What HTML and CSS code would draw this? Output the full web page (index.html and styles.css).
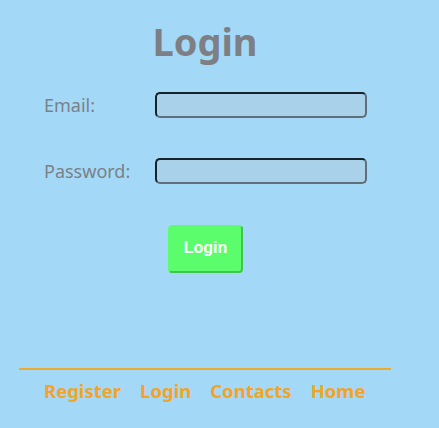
FILE: index.html
```html
<!DOCTYPE html>
<html>
<head>
<meta charset="utf-8">
<link rel="stylesheet" href="styles.css">
</head>
<body>
<div class="wrap">
  <h1 class="title">Login</h1>
  <form class="form">
    <div class="row">
      <label class="label">Email:</label>
      <input class="field" type="text">
    </div>
    <div class="row">
      <label class="label">Password:</label>
      <input class="field" type="password">
    </div>
    <div class="actions">
      <button class="btn" type="button">Login</button>
    </div>
  </form>
  <nav class="footer">
    <a class="link">Register</a>
    <a class="link">Login</a>
    <a class="link">Contacts</a>
    <a class="link">Home</a>
  </nav>
</div>
</body>
</html>
```
FILE: styles.css
```css
html, body {
  margin: 0;
  padding: 0;
  background: #a3d8f7;
  height: 100%;
}
body {
  font-family: "Noto Sans", "Open Sans", sans-serif;
  color: #7b8188;
}
.wrap {
  margin-left: 19px;
  width: 372px;
  padding-top: 15px;
}
.title {
  margin: 0;
  text-align: center;
  font-size: 38px;
  line-height: 52px;
  font-weight: 700;
  color: #7d7f84;
}
.form {
  padding-left: 25px;
  margin-top: 25px;
  display: flex;
  flex-direction: column;
  gap: 40px;
}
.row {
  display: flex;
  align-items: center;
  height: 26px;
}
.label {
  width: 111px;
  font-size: 18px;
}
.field {
  box-sizing: border-box;
  width: 212px;
  height: 26px;
  margin: 0;
  background: #a9d1ea;
  border: 2px solid #5e6e7a;
  border-top-color: #16222c;
  border-left-color: #16222c;
  border-radius: 5px;
}
.actions {
  padding-left: 124px;
  margin-top: 1px;
}
.btn {
  box-sizing: border-box;
  width: 75px;
  height: 48px;
  background: #5bfd6c;
  border: 2px solid #3fc64e;
  border-top-color: #5bfd6c;
  border-left-color: #5bfd6c;
  border-radius: 4px;
  color: #fff;
  font-family: "Liberation Sans", Arial, sans-serif;
  font-weight: 700;
  font-size: 16px;
  padding: 0 0 2px;
}
.footer {
  margin-top: 95px;
  border-top: 2px solid #eeaa2d;
  padding-left: 25px;
  padding-top: 9px;
  display: flex;
  gap: 19px;
}
.link {
  color: #f3a424;
  font-weight: 700;
  font-size: 18.5px;
  line-height: 24px;
}
```
